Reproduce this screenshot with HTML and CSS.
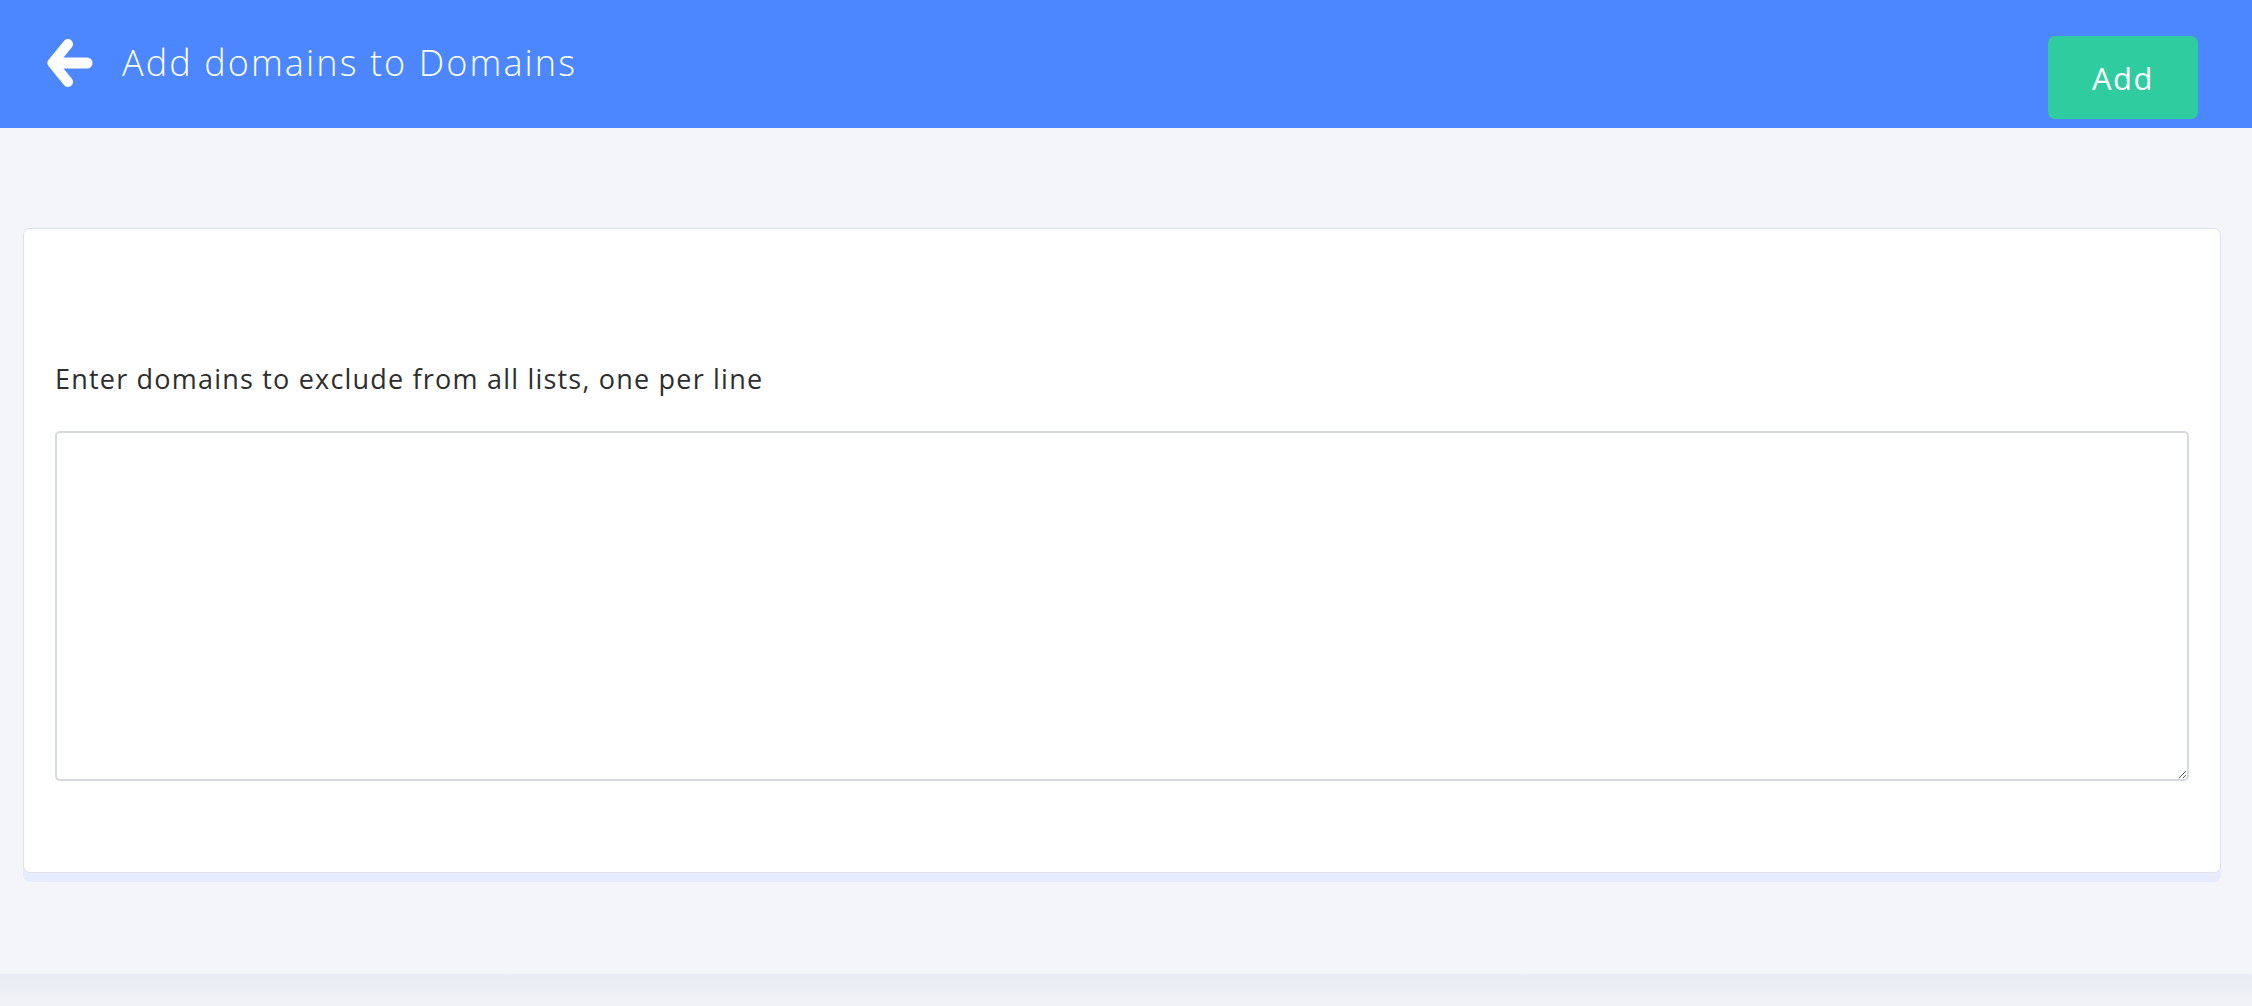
FILE: index.html
```html
<!DOCTYPE html>
<html lang="en">
  <head>
    <meta charset="UTF-8" />
    <title>Add domains to Domains</title>
    <link rel="stylesheet" href="styles.css">
  </head>
  <body>
    <div class="topbar">
      <a class="back" href="#">
        <svg width="46" height="48" viewBox="0 0 46 48">
          <path d="M21 5 L5.5 24 L21 43" fill="none" stroke="#fff" stroke-width="10" stroke-linecap="round" stroke-linejoin="round" />
          <path d="M9 24 H40" fill="none" stroke="#fff" stroke-width="11" stroke-linecap="round" />
        </svg>
      </a>
      <h1 class="title">Add domains to Domains</h1>
      <button class="add-btn">Add</button>
    </div>

    <div class="page">
      <div class="card">
        <label class="field-label" for="domains">Enter domains to exclude from all lists, one per line</label>
        <textarea id="domains"></textarea>
      </div>
    </div>

    <div class="bottom-band"></div>
  </body>
</html>
```

FILE: styles.css
```css
body {
  margin: 0;
  background: #f4f5f9;
  font-family: "Open Sans", "Noto Sans", sans-serif;
  color: #333;
  display: flex;
  flex-direction: column;
  height: 100vh;
}

.topbar {
  height: 128px;
  flex-shrink: 0;
  background: #4d87ff;
  display: flex;
  align-items: flex-start;
  padding: 0 54px 0 47px;
  box-sizing: border-box;
}

.back {
  display: block;
  margin-top: 39px;
  width: 46px;
  height: 48px;
}

.title {
  margin: 40px 0 0 29px;
  font-size: 36px;
  font-weight: 300;
  letter-spacing: 2.1px;
  line-height: 46px;
  color: #fff;
  flex: 1;
}

.add-btn {
  margin-top: 36px;
  width: 150px;
  height: 83px;
  border: none;
  border-radius: 7px;
  background: #2ecc9f;
  color: #fff;
  font-family: inherit;
  font-size: 31px;
  font-weight: 400;
  letter-spacing: 1.5px;
  cursor: pointer;
}

.page {
  flex: 1;
  padding: 100px 31px 0 23px;
}

.card {
  background: #fff;
  border: 1px solid #dfe2ea;
  border-radius: 7px;
  box-shadow: 0 9px 0 #e6ecfd;
  padding: 130px 31px 91px 31px;
}

.field-label {
  display: block;
  font-size: 27px;
  font-weight: 500;
  letter-spacing: 1.2px;
  line-height: 40px;
  color: #2e2e2e;
  margin-bottom: 32px;
}

textarea {
  display: block;
  width: 100%;
  height: 350px;
  box-sizing: border-box;
  border: 2px solid #d6d9de;
  border-radius: 5px;
  font-family: inherit;
  font-size: 24px;
  resize: vertical;
}

.bottom-band {
  height: 32px;
  flex-shrink: 0;
  background: linear-gradient(#e9ecf4, #f1f2f6);
}
```
